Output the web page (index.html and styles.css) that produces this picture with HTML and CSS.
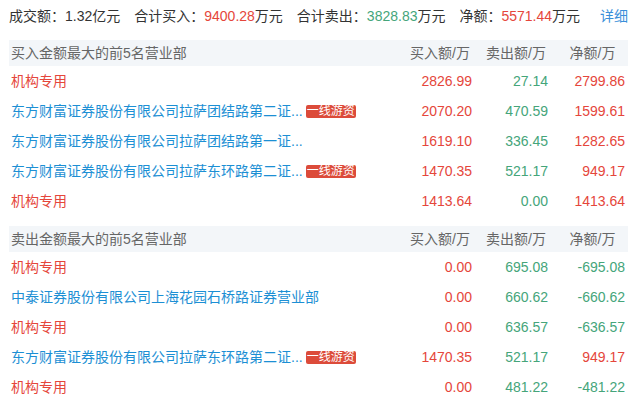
FILE: index.html
```html
<!DOCTYPE html>
<html lang="zh-CN">
<head>
<meta charset="utf-8">
<title>龙虎榜</title>
<link rel="stylesheet" href="styles.css">
</head>
<body>
<div class="wrap">
  <div class="summary">
    <span class="item">成交额：1.32亿元</span>
    <span class="item">合计买入：<span class="red">9400.28</span>万元</span>
    <span class="item">合计卖出：<span class="green">3828.83</span>万元</span>
    <span class="item">净额：<span class="red">5571.44</span>万元</span>
    <a class="detail">详细</a>
  </div>

  <div class="row head">
    <div class="name">买入金额最大的前5名营业部</div>
    <div class="th">买入额/万</div>
    <div class="th">卖出额/万</div>
    <div class="th">净额/万</div>
  </div>
  <div class="row">
    <div class="name red">机构专用</div>
    <div class="num red">2826.99</div>
    <div class="num green">27.14</div>
    <div class="num red">2799.86</div>
  </div>
  <div class="row">
    <div class="name blue">东方财富证券股份有限公司拉萨团结路第二证...<span class="badge">一线游资</span></div>
    <div class="num red">2070.20</div>
    <div class="num green">470.59</div>
    <div class="num red">1599.61</div>
  </div>
  <div class="row">
    <div class="name blue">东方财富证券股份有限公司拉萨团结路第一证...</div>
    <div class="num red">1619.10</div>
    <div class="num green">336.45</div>
    <div class="num red">1282.65</div>
  </div>
  <div class="row">
    <div class="name blue">东方财富证券股份有限公司拉萨东环路第二证...<span class="badge">一线游资</span></div>
    <div class="num red">1470.35</div>
    <div class="num green">521.17</div>
    <div class="num red">949.17</div>
  </div>
  <div class="row">
    <div class="name red">机构专用</div>
    <div class="num red">1413.64</div>
    <div class="num green">0.00</div>
    <div class="num red">1413.64</div>
  </div>

  <div class="row head second">
    <div class="name">卖出金额最大的前5名营业部</div>
    <div class="th">买入额/万</div>
    <div class="th">卖出额/万</div>
    <div class="th">净额/万</div>
  </div>
  <div class="row">
    <div class="name red">机构专用</div>
    <div class="num red">0.00</div>
    <div class="num green">695.08</div>
    <div class="num green">-695.08</div>
  </div>
  <div class="row">
    <div class="name blue">中泰证券股份有限公司上海花园石桥路证券营业部</div>
    <div class="num red">0.00</div>
    <div class="num green">660.62</div>
    <div class="num green">-660.62</div>
  </div>
  <div class="row">
    <div class="name red">机构专用</div>
    <div class="num red">0.00</div>
    <div class="num green">636.57</div>
    <div class="num green">-636.57</div>
  </div>
  <div class="row">
    <div class="name blue">东方财富证券股份有限公司拉萨东环路第二证...<span class="badge">一线游资</span></div>
    <div class="num red">1470.35</div>
    <div class="num green">521.17</div>
    <div class="num red">949.17</div>
  </div>
  <div class="row">
    <div class="name red">机构专用</div>
    <div class="num red">0.00</div>
    <div class="num green">481.22</div>
    <div class="num green">-481.22</div>
  </div>
</div>
</body>
</html>
```

FILE: styles.css
```css
html, body {
  margin: 0;
  padding: 0;
  background: #ffffff;
}

body {
  font-family: "Liberation Sans", "Noto Sans CJK SC", sans-serif;
  font-size: 14px;
  color: #333333;
}

.wrap {
  width: 619px;
  padding: 0 10px 0 9px;
}

.summary {
  display: flex;
  gap: 14px;
  height: 32px;
  line-height: 32px;
  margin-bottom: 8px;
  white-space: nowrap;
}

.detail {
  margin-left: auto;
  color: #3a8fd9;
  cursor: pointer;
}

.row {
  display: grid;
  grid-template-columns: 1fr 76px 76px 77px;
  height: 30px;
  line-height: 30px;
  white-space: nowrap;
}

.row.head {
  height: 26px;
  line-height: 26px;
  background: #f3f6f9;
  color: #666666;
}

.row.head.second {
  margin-top: 10px;
}

.name {
  padding-left: 2px;
  display: flex;
  align-items: center;
  overflow: hidden;
}

.th {
  text-align: center;
  padding-left: 6px;
}

.num {
  text-align: right;
  padding-right: 3px;
}

.red {
  color: #e5463b;
}

.green {
  color: #45a57a;
}

.blue {
  color: #1c8fd4;
}

.badge {
  display: inline-block;
  margin-left: 3px;
  padding: 0 1px;
  height: 13px;
  line-height: 13px;
  font-size: 12px;
  color: #ffffff;
  background: #dc4b3a;
  border-radius: 2px;
}
```
